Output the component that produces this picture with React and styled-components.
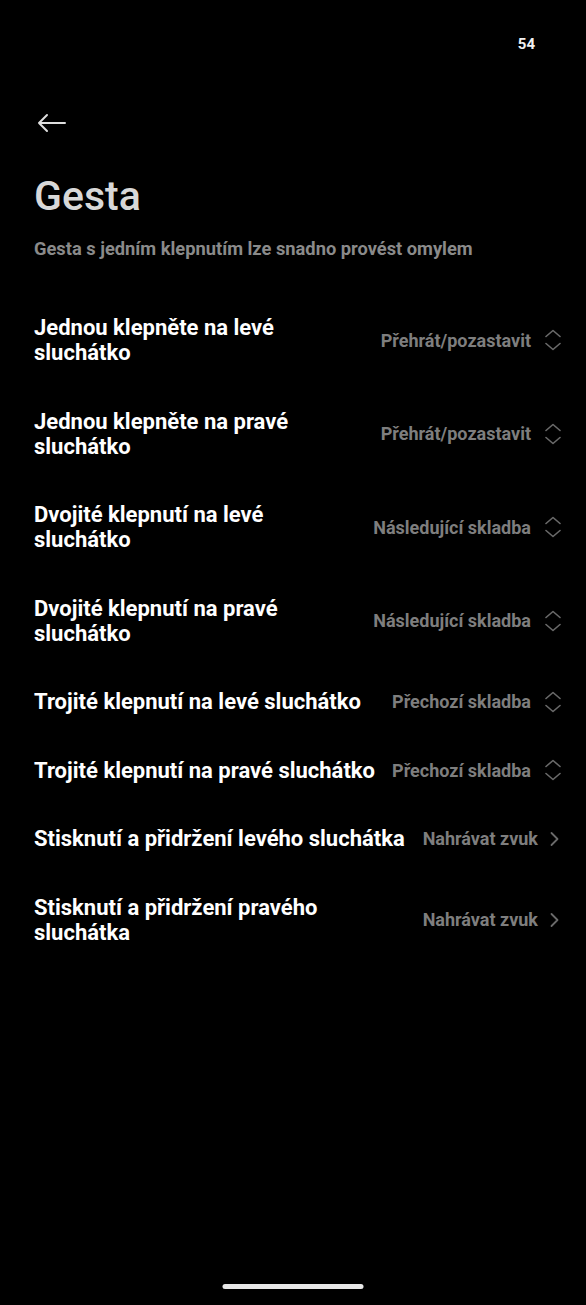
import React from "react";
import styled, { createGlobalStyle } from "styled-components";

const items = [
  { label: "Jednou klepněte na levé sluchátko", value: "Přehrát/pozastavit", kind: "select" },
  { label: "Jednou klepněte na pravé sluchátko", value: "Přehrát/pozastavit", kind: "select" },
  { label: "Dvojité klepnutí na levé sluchátko", value: "Následující skladba", kind: "select" },
  { label: "Dvojité klepnutí na pravé sluchátko", value: "Následující skladba", kind: "select" },
  { label: "Trojité klepnutí na levé sluchátko", value: "Přechozí skladba", kind: "select" },
  { label: "Trojité klepnutí na pravé sluchátko", value: "Přechozí skladba", kind: "select" },
  { label: "Stisknutí a přidržení levého sluchátka", value: "Nahrávat zvuk", kind: "link" },
  { label: "Stisknutí a přidržení pravého sluchátka", value: "Nahrávat zvuk", kind: "link" },
];

export default function App() {
  return (
    <Screen>
      <GlobalStyle />
      <StatusBar>
        <Battery>54</Battery>
      </StatusBar>
      <TopBar>
        <BackButton aria-label="Zpět">
          <svg width="30" height="20" viewBox="0 0 30 20" fill="none">
            <path d="M28 10H2M10 2L2 10l8 8" stroke="#dedede" strokeWidth="2" strokeLinecap="round" strokeLinejoin="round" />
          </svg>
        </BackButton>
      </TopBar>
      <Title>Gesta</Title>
      <Subtitle>Gesta s jedním klepnutím lze snadno provést omylem</Subtitle>
      <List>
        {items.map((item) => (
          <Row key={item.label}>
            <Label>{item.label}</Label>
            <Value $link={item.kind === "link"}>
              <span>{item.value}</span>
              {item.kind === "select" ? (
                <svg width="16" height="22" viewBox="0 0 16 22" fill="none">
                  <path d="M1 7.5L8 1.5l7 6M1 14.5L8 20.5l7-6" stroke="#6a6a6a" strokeWidth="1.6" strokeLinecap="round" strokeLinejoin="round" />
                </svg>
              ) : (
                <svg width="9" height="22" viewBox="0 0 9 22" fill="none">
                  <path d="M1.5 5l6 6-6 6" stroke="#6a6a6a" strokeWidth="1.8" strokeLinecap="round" strokeLinejoin="round" />
                </svg>
              )}
            </Value>
          </Row>
        ))}
      </List>
      <HomeIndicator />
    </Screen>
  );
}

const GlobalStyle = createGlobalStyle`
  html, body {
    margin: 0;
    padding: 0;
    background: #000;
  }
  body {
    font-family: Roboto, "Noto Sans", sans-serif;
  }
`;

const Screen = styled.div`
  position: relative;
  width: 586px;
  height: 1305px;
  background: #000;
  color: #fff;
  display: flex;
  flex-direction: column;
  overflow: hidden;
`;

const StatusBar = styled.div`
  height: 88px;
  display: flex;
  justify-content: flex-end;
  align-items: flex-start;
  padding: 35px 51px 0 0;
  box-sizing: border-box;
`;

const Battery = styled.span`
  font-size: 15px;
  font-weight: 700;
  color: #f2f2f2;
`;

const TopBar = styled.div`
  height: 70px;
  display: flex;
  align-items: center;
  padding-left: 37px;
`;

const BackButton = styled.button`
  background: none;
  border: 0;
  padding: 0;
  display: flex;
`;

const Title = styled.h1`
  margin: 12px 0 0 34px;
  font-size: 41px;
  font-weight: 500;
  color: #d8d8d8;
  line-height: 52px;
`;

const Subtitle = styled.p`
  margin: 15px 0 0 34px;
  font-size: 18.3px;
  font-weight: 700;
  color: #8a8a8a;
  line-height: 24px;
`;

const List = styled.div`
  display: flex;
  flex-direction: column;
  margin-top: 32px;
  padding: 0 25px 0 34px;
`;

const Row = styled.div`
  display: flex;
  align-items: center;
  justify-content: space-between;
  gap: 13px;
  padding: 22px 0 21.5px;
`;

const Label = styled.div`
  flex: 1;
  font-size: 22px;
  font-weight: 700;
  line-height: 25px;
  color: #fff;
`;

const Value = styled.div`
  display: flex;
  align-items: center;
  gap: ${(p) => (p.$link ? "12px" : "14px")};
  padding-right: ${(p) => (p.$link ? "2px" : "0")};
  font-size: 18px;
  font-weight: 700;
  color: #7e7e7e;
  white-space: nowrap;
`;

const HomeIndicator = styled.div`
  position: absolute;
  bottom: 16px;
  left: 50%;
  transform: translateX(-50%);
  width: 141px;
  height: 5px;
  border-radius: 3px;
  background: #e8e8e8;
`;
